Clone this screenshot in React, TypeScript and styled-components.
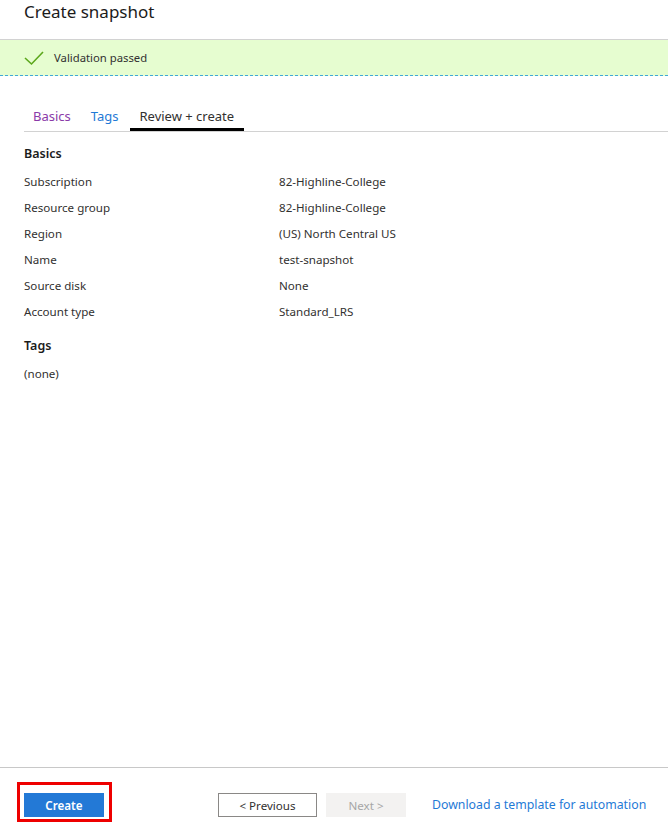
import React from "react";
import styled, { createGlobalStyle } from "styled-components";

const GlobalStyle = createGlobalStyle`
  html, body {
    margin: 0;
    padding: 0;
    background: #ffffff;
  }
  body {
    font-family: "Noto Sans", "Open Sans", sans-serif;
    color: #323130;
  }
`;

const Page = styled.div`
  display: flex;
  flex-direction: column;
  height: 827px;
  width: 668px;
  overflow: hidden;
`;

const Title = styled.h1`
  margin: 0;
  padding: 0 24px;
  height: 39px;
  line-height: 24px;
  font-size: 17px;
  font-weight: 400;
  color: #1b1b1b;
`;

const Banner = styled.div`
  display: flex;
  align-items: center;
  gap: 10px;
  height: 35px;
  padding: 0 24px;
  background: #e6fdd0;
  border-top: 1px solid #d2d2d2;
  border-bottom: 1px dashed #40a8d8;
  font-size: 11.3px;
  color: #323130;
`;

const Body = styled.div`
  flex: 1;
  padding: 0 0 0 24px;
`;

const TabBar = styled.div`
  display: flex;
  align-items: flex-end;
  margin-top: 30px;
  margin-bottom: 12px;
  border-bottom: 1px solid #d2d2d2;
`;

const Tab = styled.div<{ $color: string; $active?: boolean }>`
  padding: 0 ${(p) => (p.$active ? 10 : 9)}px 2px;
  margin-right: 2px;
  font-size: 13px;
  line-height: 20px;
  color: ${(p) => p.$color};
  border-bottom: 3px solid ${(p) => (p.$active ? "#000000" : "transparent")};
`;

const Section = styled.h2<{ $gap?: number }>`
  margin: ${(p) => p.$gap ?? 0}px 0 0;
  font-size: 12.5px;
  font-weight: 600;
  color: #1b1b1b;
  line-height: 20px;
`;

const Rows = styled.div`
  display: flex;
  flex-direction: column;
  margin-top: 4px;
`;

const Row = styled.div`
  display: grid;
  grid-template-columns: 255px 1fr;
  height: 26px;
  align-items: center;
  font-size: 11.6px;
  color: #323130;
`;

const Plain = styled.div`
  margin-top: 8px;
  font-size: 11.6px;
  color: #323130;
  line-height: 20px;
`;

const Footer = styled.div`
  display: flex;
  align-items: flex-start;
  height: 60px;
  box-sizing: border-box;
  padding: 14px 0 0 17px;
  border-top: 1px solid #c8c8c8;
`;

const Highlight = styled.div`
  display: flex;
  padding: 8px 5px 2px 4px;
  border: 3px solid #ee0000;
`;

const Button = styled.button<{ $variant: "primary" | "secondary" | "disabled" }>`
  width: ${(p) => (p.$variant === "secondary" ? "99px" : "80px")};
  height: 24px;
  font-family: inherit;
  font-size: 11.6px;
  padding: 0;
  cursor: pointer;
  border: 1px solid
    ${(p) =>
      p.$variant === "primary"
        ? "#2379d6"
        : p.$variant === "secondary"
        ? "#8a8886"
        : "#f3f2f1"};
  background: ${(p) =>
    p.$variant === "primary" ? "#2379d6" : p.$variant === "secondary" ? "#ffffff" : "#f3f2f1"};
  color: ${(p) =>
    p.$variant === "primary" ? "#ffffff" : p.$variant === "secondary" ? "#323130" : "#a6a6a6"};
  font-weight: ${(p) => (p.$variant === "primary" ? 600 : 400)};
`;

const NavButtons = styled.div`
  display: flex;
  gap: 9px;
  margin: 11px 0 0 106px;
`;

const Link = styled.a`
  margin: 11px 0 0 26px;
  line-height: 24px;
  font-size: 12.3px;
  color: #1f7ad6;
  text-decoration: none;
`;

const CheckIcon = () => (
  <svg width="20" height="16" viewBox="0 0 20 16">
    <path d="M1 8 L7.5 14 L19 2" fill="none" stroke="#5ba71b" strokeWidth="1.6" />
  </svg>
);

const basics: [string, string][] = [
  ["Subscription", "82-Highline-College"],
  ["Resource group", "82-Highline-College"],
  ["Region", "(US) North Central US"],
  ["Name", "test-snapshot"],
  ["Source disk", "None"],
  ["Account type", "Standard_LRS"],
];

export default function App() {
  return (
    <Page>
      <GlobalStyle />
      <Title>Create snapshot</Title>
      <Banner>
        <CheckIcon />
        <span>Validation passed</span>
      </Banner>
      <Body>
        <TabBar>
          <Tab $color="#8a3aa8">Basics</Tab>
          <Tab $color="#1f7ad6">Tags</Tab>
          <Tab $color="#323130" $active>
            Review + create
          </Tab>
        </TabBar>
        <Section>Basics</Section>
        <Rows>
          {basics.map(([label, value]) => (
            <Row key={label}>
              <span>{label}</span>
              <span>{value}</span>
            </Row>
          ))}
        </Rows>
        <Section $gap={12}>Tags</Section>
        <Plain>(none)</Plain>
      </Body>
      <Footer>
        <Highlight>
          <Button $variant="primary">Create</Button>
        </Highlight>
        <NavButtons>
          <Button $variant="secondary">&lt; Previous</Button>
          <Button $variant="disabled" disabled>
            Next &gt;
          </Button>
        </NavButtons>
        <Link href="#">Download a template for automation</Link>
      </Footer>
    </Page>
  );
}
